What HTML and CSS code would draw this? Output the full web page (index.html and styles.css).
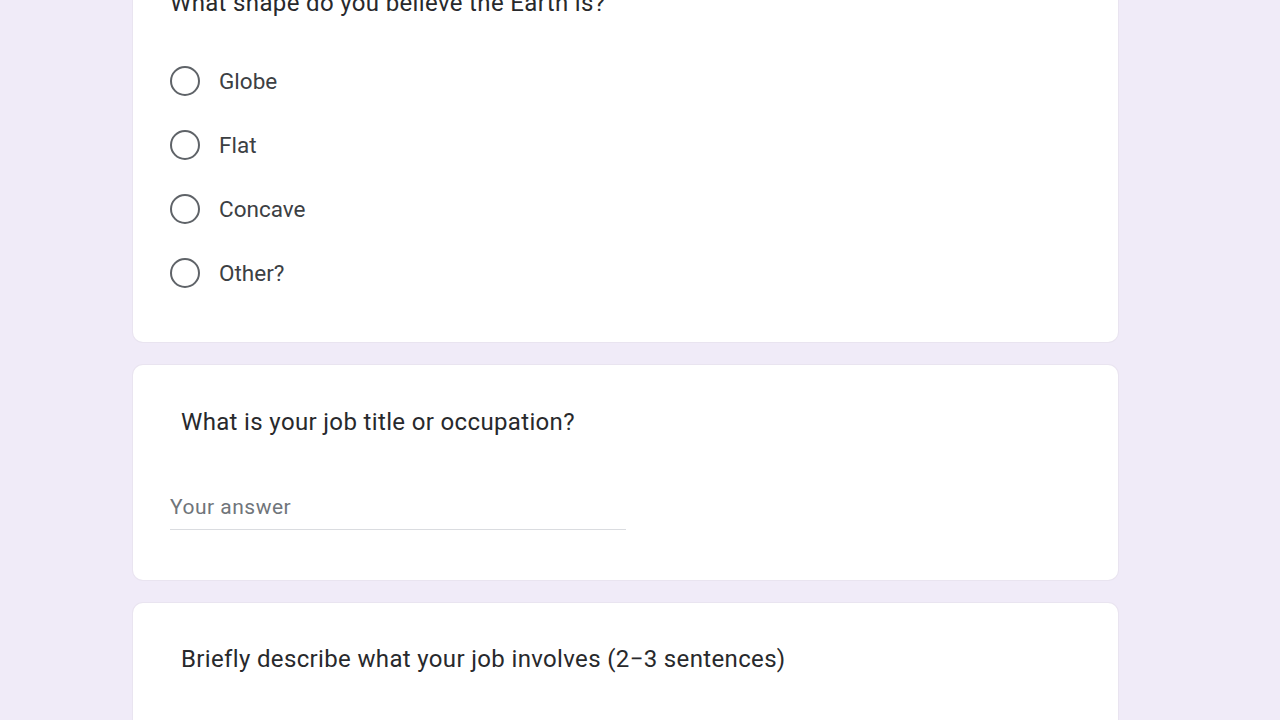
FILE: index.html
```html
<!DOCTYPE html>
<html>
<head>
<meta charset="utf-8">
<link rel="stylesheet" href="styles.css">
</head>
<body>
<main class="form">
  <section class="card card-choice">
    <div class="question q-first">What shape do you believe the Earth is?</div>
    <div class="options">
      <label class="option"><span class="radio"></span><span class="opt-label">Globe</span></label>
      <label class="option"><span class="radio"></span><span class="opt-label">Flat</span></label>
      <label class="option"><span class="radio"></span><span class="opt-label">Concave</span></label>
      <label class="option"><span class="radio"></span><span class="opt-label">Other?</span></label>
    </div>
  </section>
  <section class="card card-text">
    <div class="question">What is your job title or occupation?</div>
    <div class="answer">Your answer</div>
  </section>
  <section class="card card-last">
    <div class="question">Briefly describe what your job involves (2&minus;3 sentences)</div>
  </section>
</main>
</body>
</html>
```
FILE: styles.css
```css
html, body {
  margin: 0;
  padding: 0;
  background: #f0ebf8;
  font-family: Roboto, "Noto Sans", sans-serif;
  color: #202124;
}
body {
  height: 720px;
  overflow: hidden;
}
.form {
  width: 985px;
  margin-left: 133px;
  margin-top: -37px;
  display: flex;
  flex-direction: column;
  gap: 23px;
}
.card {
  background: #fff;
  border-radius: 10px;
  box-shadow: 0 0 0 1px #e9e4f0;
}
.question {
  font-size: 24px;
  line-height: 30px;
  letter-spacing: 0.35px;
  padding-left: 48px;
  color: #28292c;
}
.q-first {
  padding-left: 37px;
}
.card-choice {
  padding: 25px 0 37px;
}
.options {
  display: flex;
  flex-direction: column;
  padding-left: 37px;
  margin-top: 31px;
}
.option {
  display: flex;
  align-items: center;
  height: 64px;
}
.radio {
  width: 26px;
  height: 26px;
  border: 2.5px solid #5f6368;
  border-radius: 50%;
  flex: none;
}
.opt-label {
  margin-left: 19px;
  font-size: 22.5px;
  color: #3c4043;
}
.card-text {
  padding: 42px 0 50px;
}
.answer {
  margin-left: 37px;
  margin-top: 58px;
  width: 456px;
  font-size: 21px;
  line-height: 24px;
  color: #70757a;
  padding-bottom: 10px;
  border-bottom: 1.5px solid #dadce0;
  letter-spacing: 0.5px;
}
.card-last {
  padding-top: 41px;
  height: 200px;
}
```
